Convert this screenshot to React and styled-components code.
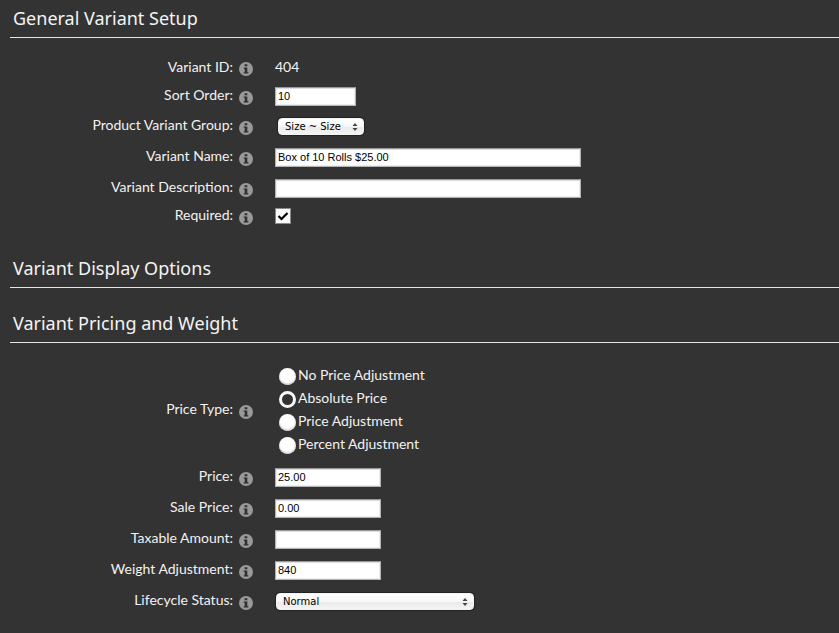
import React, { useState } from "react";
import styled, { createGlobalStyle } from "styled-components";

const GlobalStyle = createGlobalStyle`
  *, *::before, *::after { box-sizing: border-box; }
  body {
    margin: 0;
    background: #333333;
    color: #f2f2f2;
    font-family: Lato, "Noto Sans", sans-serif;
    font-size: 14px;
    font-weight: 400;
  }
`;

const Form = styled.form`
  padding-left: 10px;
`;

const Section = styled.section`
  display: flex;
  flex-direction: column;
  margin-bottom: ${(p) => (p.$spaced ? 21 : 17)}px;
`;

const SectionTitle = styled.h2`
  margin: 0;
  height: 38px;
  padding: 0 3px;
  border-bottom: 1px solid #e6e6e6;
  font-family: "Noto Sans", sans-serif;
  font-size: 18px;
  font-weight: 400;
  line-height: 36px;
  color: #f4f4f4;
`;

const Rows = styled.div`
  padding-top: 16px;
`;

const Row = styled.div`
  display: grid;
  grid-template-columns: 223px 14px minmax(0, 1fr);
  column-gap: 6px;
  align-items: center;
  min-height: ${(p) => p.$height || 31}px;
`;

const Label = styled.label`
  padding-bottom: 3px;
  text-align: right;
  line-height: 20px;
`;

const Info = styled.svg`
  display: block;
  width: 14px;
  height: 14px;
  margin-top: 2px;
`;

const Field = styled.div`
  display: flex;
  align-items: center;
  padding-left: 16px;
`;

const Value = styled.output`
  padding-bottom: 2px;
  line-height: 20px;
`;

const TextInput = styled.input`
  width: ${(p) => p.$width}px;
  height: 19px;
  padding: 0 2px 1px;
  border: 1px solid #b4b4b4;
  border-top-color: #999999;
  border-radius: 0;
  background: #ffffff;
  box-shadow: inset 0 1px 0 #dddddd, inset 0 0 0 1px #eeeeee;
  color: #000000;
  font: 11px "Liberation Sans", Arial, sans-serif;
  outline: none;
`;

const SelectBox = styled.div`
  display: grid;
  align-items: center;
  width: ${(p) => p.$width}px;
  margin-left: ${(p) => p.$inset}px;
`;

const Select = styled.select`
  grid-area: 1 / 1;
  appearance: none;
  width: 100%;
  height: 17px;
  padding: 0 16px 0 6px;
  border: 1px solid #f4f4f4;
  border-radius: 4px;
  background: linear-gradient(#ffffff 0%, #f7f7f7 50%, #eaeaea 51%, #f3f3f3 100%);
  box-shadow: 0 0 1px 1px #222222;
  color: #000000;
  font: 10px "DejaVu Sans", sans-serif;
  line-height: 15px;
`;

const Arrows = styled.svg`
  grid-area: 1 / 1;
  justify-self: end;
  width: 6px;
  height: 8px;
  margin-right: 6px;
  pointer-events: none;
`;

const CheckBox = styled.span`
  display: grid;
  place-items: center;
  width: 16px;
  height: 18px;
  padding-bottom: 2px;
`;

const CheckInput = styled.input`
  grid-area: 1 / 1;
  appearance: none;
  width: 16px;
  height: 16px;
  margin: 0;
  border: 1px solid #8a8a8a;
  background: #fafafa;
`;

const Tick = styled.svg`
  grid-area: 1 / 1;
  z-index: 1;
  width: 12px;
  height: 12px;
  pointer-events: none;
`;

const RadioList = styled.div`
  display: flex;
  flex-direction: column;
  padding: 4px 0 6px 20px;
`;

const RadioLabel = styled.label`
  display: flex;
  align-items: center;
  height: 23px;
  gap: 2px;
  line-height: 20px;
`;

const RadioInput = styled.input`
  appearance: none;
  width: 17px;
  height: 17px;
  margin: 3px 0 0;
  border-radius: 50%;
  background: #ffffff;
  box-shadow: inset 0 -1px 2px #bbbbbb;
  &:checked {
    border: 3px solid #f7f7f7;
    background: #333333;
    box-shadow: none;
  }
`;

function InfoIcon() {
  return (
    <Info viewBox="0 0 14 14" aria-hidden="true">
      <circle cx="7" cy="7" r="7" fill="#999999" />
      <path d="M5.6 2.3h2.7v2H5.6zM4.7 5.4h3.6v4.8h1.1v1.3H4.7v-1.3h1V6.7h-1z" fill="#303030" />
    </Info>
  );
}

function FieldRow({ id, label, height, children }) {
  return (
    <Row $height={height}>
      <Label htmlFor={id}>{label}:</Label>
      <InfoIcon />
      <Field>{children}</Field>
    </Row>
  );
}

function TextRow({ id, label, value, width, height }) {
  return (
    <FieldRow id={id} label={label} height={height}>
      <TextInput id={id} type="text" defaultValue={value} $width={width} />
    </FieldRow>
  );
}

function SelectRow({ id, label, option, width, inset }) {
  return (
    <FieldRow id={id} label={label}>
      <SelectBox $width={width} $inset={inset}>
        <Select id={id}>
          <option>{option}</option>
        </Select>
        <Arrows viewBox="0 0 6 8" aria-hidden="true">
          <path d="M3 0l2.5 3h-5zM3 8l2.5-3h-5z" fill="#444444" />
        </Arrows>
      </SelectBox>
    </FieldRow>
  );
}

const priceTypes = ["No Price Adjustment", "Absolute Price", "Price Adjustment", "Percent Adjustment"];

export default function App() {
  const [required, setRequired] = useState(true);
  return (
    <>
      <GlobalStyle />
      <Form>
        <Section $spaced>
          <SectionTitle>General Variant Setup</SectionTitle>
          <Rows>
            <FieldRow id="variant-id" label="Variant ID" height={28}>
              <Value id="variant-id">404</Value>
            </FieldRow>
            <TextRow id="sort" label="Sort Order" value="10" width={81} height={29} />
            <SelectRow id="group" label="Product Variant Group" option="Size ~ Size" width={86} inset={3} />
            <TextRow id="name" label="Variant Name" value="Box of 10 Rolls $25.00" width={306} />
            <TextRow id="description" label="Variant Description" value="" width={306} />
            <FieldRow id="required" label="Required" height={25}>
              <CheckBox>
                <CheckInput
                  id="required"
                  type="checkbox"
                  checked={required}
                  onChange={(e) => setRequired(e.target.checked)}
                />
                {required && (
                  <Tick viewBox="0 0 12 12" aria-hidden="true">
                    <path d="M1.5 6l3 3 6-6" fill="none" stroke="#000000" strokeWidth="2.2" />
                  </Tick>
                )}
              </CheckBox>
            </FieldRow>
          </Rows>
        </Section>

        <Section>
          <SectionTitle>Variant Display Options</SectionTitle>
        </Section>

        <Section>
          <SectionTitle>Variant Pricing and Weight</SectionTitle>
          <Rows>
            <Row role="radiogroup" aria-labelledby="price-type" $height={103}>
              <Label as="span" id="price-type">Price Type:</Label>
              <InfoIcon />
              <RadioList>
                {priceTypes.map((type) => (
                  <RadioLabel key={type}>
                    <RadioInput type="radio" name="priceType" defaultChecked={type === "Absolute Price"} />
                    {type}
                  </RadioLabel>
                ))}
              </RadioList>
            </Row>
            <TextRow id="price" label="Price" value="25.00" width={106} />
            <TextRow id="sale-price" label="Sale Price" value="0.00" width={106} />
            <TextRow id="taxable" label="Taxable Amount" value="" width={106} />
            <TextRow id="weight" label="Weight Adjustment" value="840" width={106} />
            <SelectRow id="status" label="Lifecycle Status" option="Normal" width={198} inset={1} />
          </Rows>
        </Section>
      </Form>
    </>
  );
}
